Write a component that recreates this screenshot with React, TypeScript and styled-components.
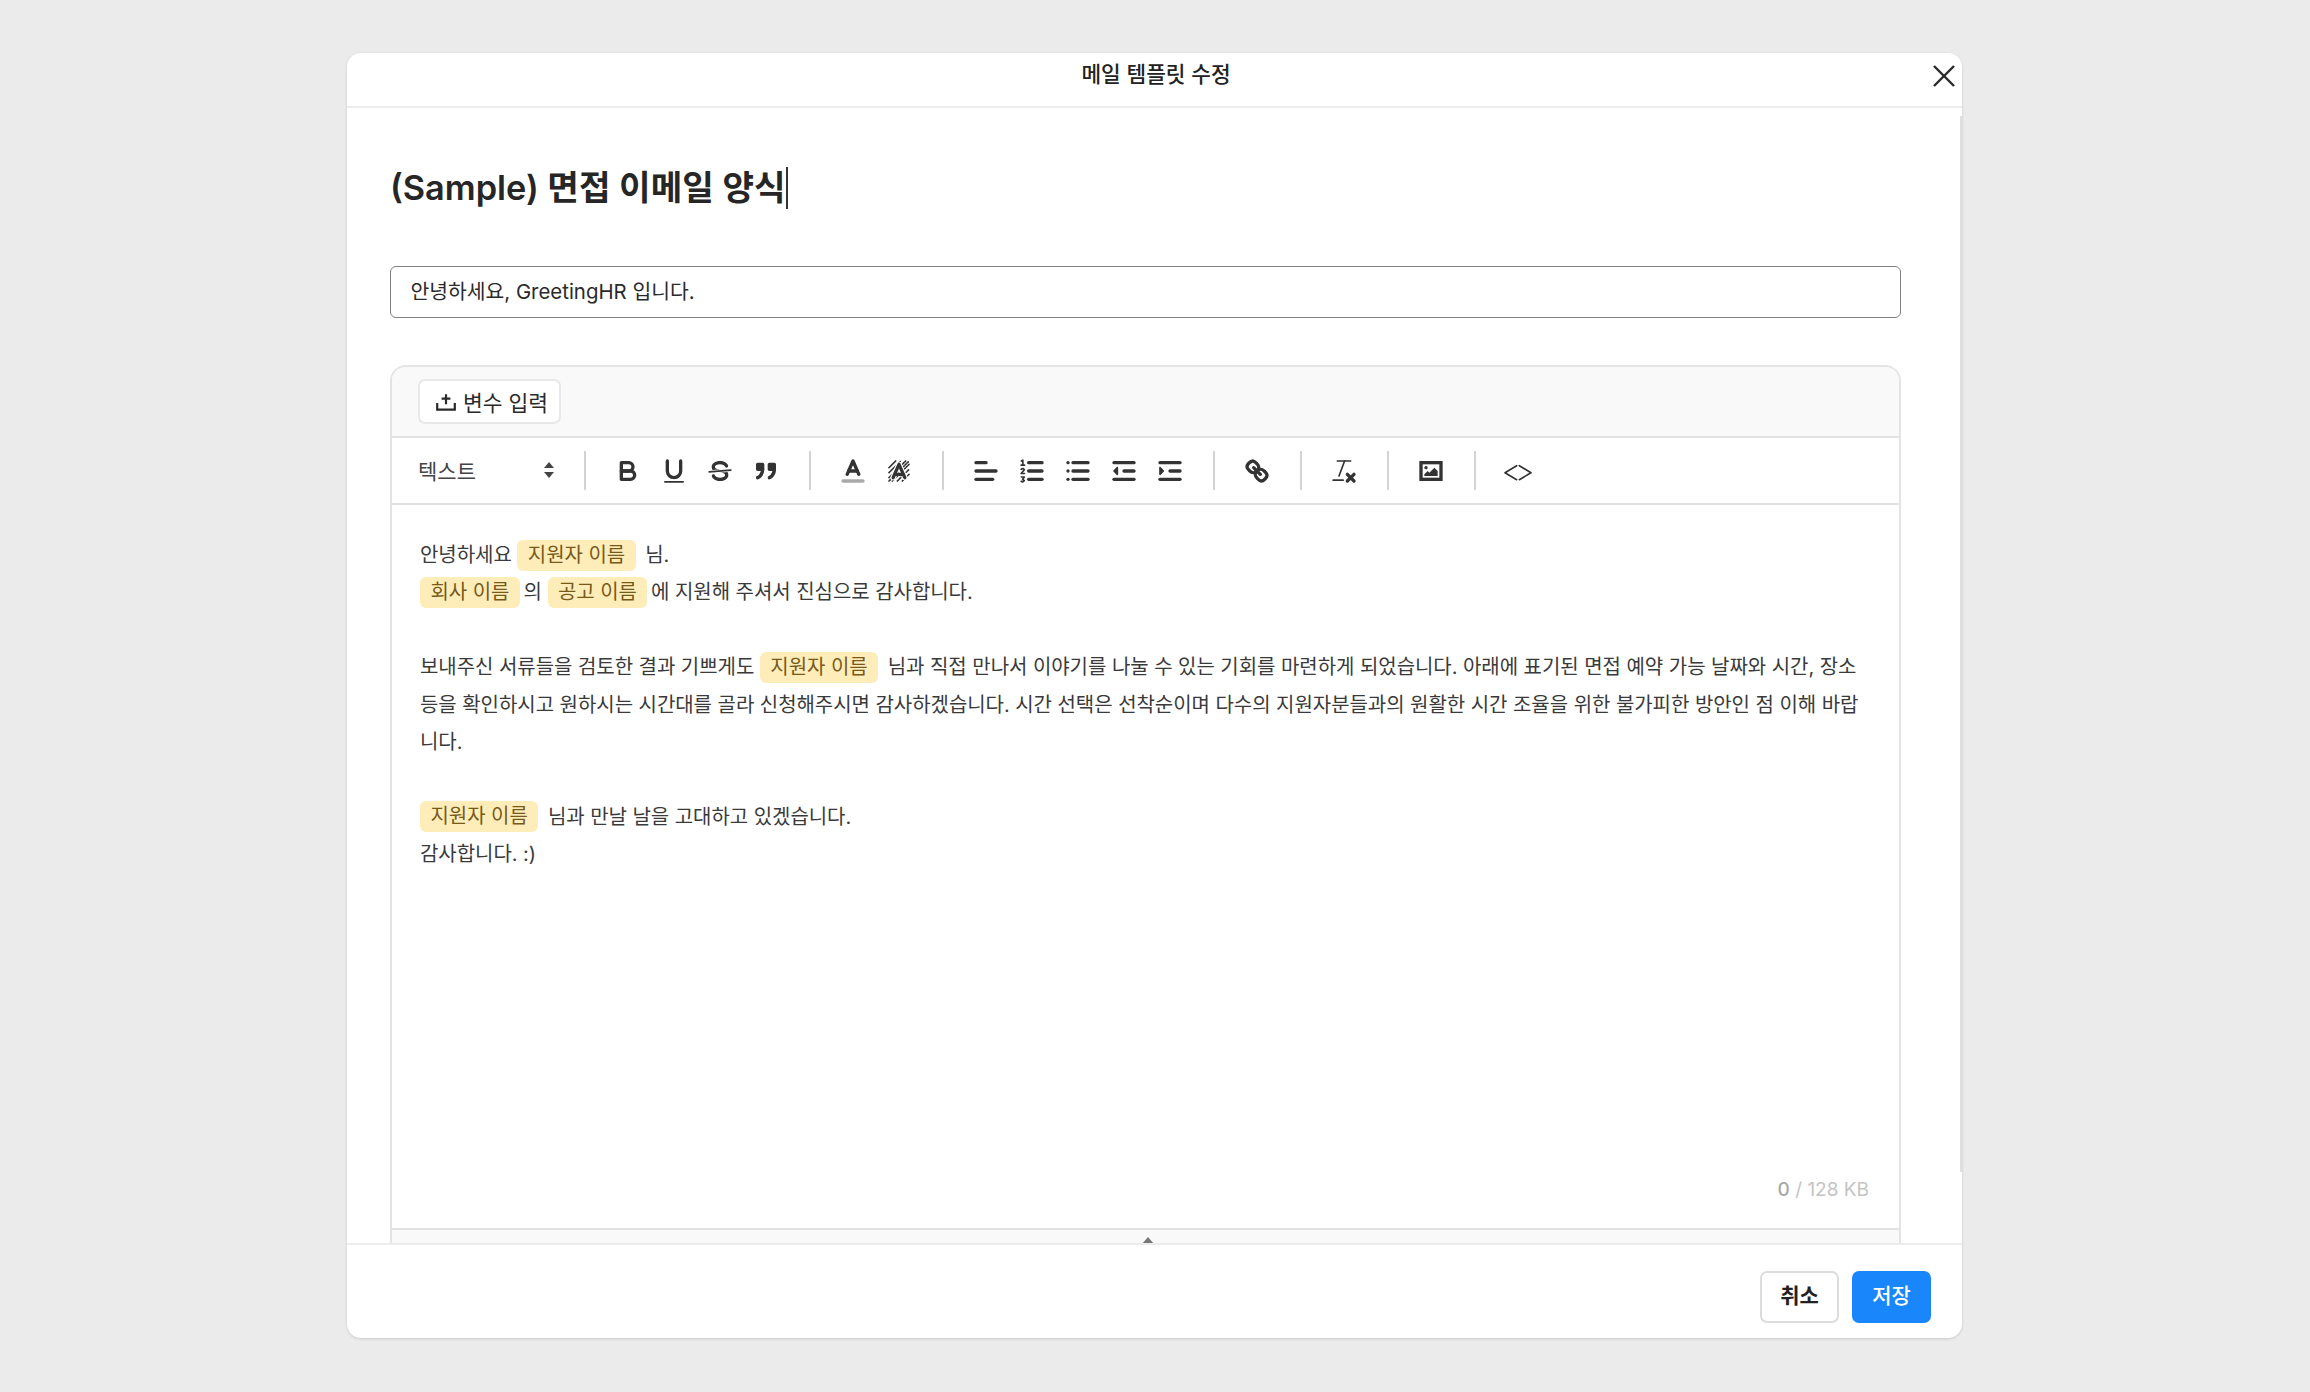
import styled, { createGlobalStyle } from 'styled-components'
import type { ReactNode } from 'react'

const FONT = `Inter, "Noto Sans CJK KR", sans-serif`

const GlobalStyle = createGlobalStyle`
  html, body {
    margin: 0;
    padding: 0;
    background: #ebebeb;
    font-family: ${FONT};
  }
  * {
    box-sizing: border-box;
  }
`

const Page = styled.div`
  width: 2310px;
  height: 1392px;
  overflow: hidden;
  padding-top: 53px;
  padding-left: 347px;
`

const Modal = styled.div`
  width: 1615px;
  height: 1285px;
  background: #fff;
  border-radius: 14px;
  box-shadow: 0 1px 3px rgba(0, 0, 0, 0.14);
  display: flex;
  flex-direction: column;
  overflow: hidden;
`

const ModalHeader = styled.header`
  position: relative;
  flex: none;
  height: 55px;
  border-bottom: 2px solid #ececec;
  display: flex;
  justify-content: center;
  padding: 5px 0 0 3px;
`

const ModalTitle = styled.h2`
  margin: 0;
  font-size: 21.4px;
  line-height: 32px;
  font-weight: 500;
  color: #222;
`

const CloseButton = styled.button`
  position: absolute;
  top: 10px;
  right: 5px;
  width: 26px;
  height: 26px;
  padding: 0;
  border: 0;
  background: none;
  color: #2b2b2b;
`

const ModalBody = styled.div`
  position: relative;
  flex: 1;
  min-height: 0;
  overflow: hidden;
  padding: 58px 61px 0 43px;
`

const ScrollThumb = styled.div`
  position: absolute;
  top: 8px;
  right: 0;
  width: 2px;
  height: 1056px;
  background: #dedede;
`

const TitleLine = styled.div`
  display: flex;
  align-items: center;
  height: 44px;
  margin-bottom: 56px;
`

const TitleText = styled.h1`
  margin: 0;
  font-size: 34.3px;
  line-height: 44px;
  font-weight: 600;
  color: #262626;
`

const Caret = styled.span`
  width: 2px;
  height: 42px;
  background: #333;
`

const SubjectField = styled.div`
  height: 52px;
  border: 1.5px solid #808080;
  border-radius: 6px;
  padding: 0 19.5px 5px;
  display: flex;
  align-items: center;
  font-size: 20.4px;
  color: #2a2a2a;
`

const Editor = styled.section`
  margin-top: 47px;
  border: 2px solid #e4e4e4;
  border-bottom: 0;
  border-radius: 16px 16px 0 0;
  overflow: hidden;
`

const VariableBar = styled.div`
  height: 71px;
  background: #f9f9f9;
  border-bottom: 2px solid #e2e2e2;
  padding: 12px 0 0 26px;
`

const VariableButton = styled.button`
  width: 143px;
  height: 45px;
  padding: 0 0 0 4px;
  background: #fff;
  border: 2px solid #e8e8e8;
  border-radius: 7px;
  display: flex;
  align-items: center;
  justify-content: center;
  gap: 6px;
  font-family: ${FONT};
  font-size: 21.5px;
  font-weight: 400;
  color: #2a2a2a;
`

const Toolbar = styled.div`
  height: 67px;
  border-bottom: 2px solid #e2e2e2;
  display: flex;
  align-items: center;
  padding-left: 26px;
`

const HeadingSelect = styled.div`
  width: 139px;
  display: flex;
  align-items: center;
  justify-content: space-between;
  padding: 0 2px 2px 0;
  font-size: 21px;
  color: #444;
  margin-right: 7.2px;
`

const Divider = styled.span`
  flex: none;
  width: 2px;
  height: 39px;
  background: #d4d4d4;
  margin: 0 19.5px;
`

const ToolButton = styled.span`
  flex: none;
  width: 46px;
  height: 30px;
  display: flex;
  align-items: center;
  justify-content: center;
  color: #333;

  svg {
    display: block;
    fill: none;
    stroke: currentColor;
    stroke-width: 2;
    stroke-linecap: round;
    stroke-linejoin: round;
  }
  .thin {
    stroke-width: 1;
  }
  .solid {
    fill: currentColor;
    stroke: none;
  }
`

const EditArea = styled.div`
  height: 723px;
  padding: 32px 30px 0 28px;
  display: flex;
  flex-direction: column;
`

const Copy = styled.div`
  font-size: 20px;
  line-height: 37.4px;
  letter-spacing: -0.05px;
  color: #3a3a3a;
  white-space: nowrap;
`

const Chip = styled.span<{ $trail?: boolean }>`
  display: inline-block;
  height: 31px;
  line-height: 30px;
  padding: 0 10.5px;
  margin-right: ${(p) => (p.$trail ? '4px' : '-2px')};
  background: #ffedb9;
  border-radius: 6px;
  color: #77591a;
  vertical-align: 0.5px;
`

const ByteCount = styled.div`
  margin-top: auto;
  margin-bottom: 26px;
  align-self: flex-end;
  font-size: 19px;
  line-height: 24px;
  color: #c4c4c4;

  b {
    font-weight: 500;
    color: #a8a8a8;
  }
`

const ResizeBar = styled.div`
  height: 16px;
  background: #f9f9f9;
  border-top: 2px solid #e2e2e2;
  display: flex;
  justify-content: center;
  align-items: flex-end;
  padding-left: 5px;
`

const ResizeArrow = styled.span`
  width: 0;
  height: 0;
  border-left: 6px solid transparent;
  border-right: 6px solid transparent;
  border-bottom: 7px solid #777;
`

const ModalFooter = styled.footer`
  flex: none;
  height: 95px;
  border-top: 2px solid #ececec;
  display: flex;
  justify-content: flex-end;
  gap: 13px;
  padding: 26px 31px 0 0;
`

const FooterButton = styled.button<{ $primary?: boolean }>`
  width: 79px;
  height: 52px;
  padding: 0 0 6px;
  border-radius: 7px;
  border: 2px solid ${(p) => (p.$primary ? '#1a86fb' : '#dcdcdc')};
  background: ${(p) => (p.$primary ? '#1a86fb' : '#fff')};
  color: ${(p) => (p.$primary ? '#fff' : '#222')};
  font-family: ${FONT};
  font-size: 21px;
  font-weight: ${(p) => (p.$primary ? 500 : 600)};
`

const Icon = ({ children }: { children: ReactNode }) => (
  <ToolButton>
    <svg width="30" height="30" viewBox="0 0 18 18">{children}</svg>
  </ToolButton>
)

const BackgroundA = () => (
  <>
    <g className="thin" strokeDasharray="1 0.7">
      <line x1="3" y1="7" x2="7" y2="3" />
      <line x1="3" y1="10" x2="10" y2="3" />
      <line x1="3" y1="13" x2="13" y2="3" />
      <line x1="3" y1="15" x2="15" y2="3" />
      <line x1="5" y1="15" x2="15" y2="5" />
      <line x1="8" y1="15" x2="15" y2="8" />
      <line x1="11" y1="15" x2="15" y2="11" />
    </g>
    <polyline points="5.5 13 9 5 12.5 13" stroke="#fff" strokeWidth="3.4" />
    <polyline points="5.5 13 9 5 12.5 13" />
    <line x1="11.2" x2="6.8" y1="11" y2="11" />
  </>
)

const OrderedMarks = () => (
  <>
    <polyline className="thin" points="2.6 3 3.5 2.5 3.5 5.5" />
    <line className="thin" x1="2.5" x2="4.5" y1="5.5" y2="5.5" />
    <polyline className="thin" points="2.5 8 3.5 7.5 4.4 8.2 2.5 10.5 4.5 10.5" />
    <polyline className="thin" points="2.6 12.6 4.4 12.6 3.4 14 4.4 14.8 3.5 15.5 2.5 15.2" />
  </>
)

const App = () => {
  return (
    <Page>
      <GlobalStyle />
      <Modal>
        <ModalHeader>
          <ModalTitle>메일 템플릿 수정</ModalTitle>
          <CloseButton aria-label="닫기">
            <svg width="26" height="26" viewBox="0 0 26 26" fill="none" stroke="currentColor" strokeWidth="2.4">
              <line x1="3" y1="3" x2="23" y2="23" />
              <line x1="23" y1="3" x2="3" y2="23" />
            </svg>
          </CloseButton>
        </ModalHeader>

        <ModalBody>
          <ScrollThumb />
          <TitleLine>
            <TitleText>(Sample) 면접 이메일 양식</TitleText>
            <Caret />
          </TitleLine>

          <SubjectField>안녕하세요, GreetingHR 입니다.</SubjectField>

          <Editor>
            <VariableBar>
              <VariableButton>
                <svg width="22" height="22" viewBox="0 0 20 20" fill="none" stroke="currentColor" strokeWidth="2">
                  <path d="M2 11v6h16v-6" />
                  <path d="M10 3v9M6 7h8" />
                </svg>
                변수 입력
              </VariableButton>
            </VariableBar>

            <Toolbar>
              <HeadingSelect>
                텍스트
                <svg width="12" height="20" viewBox="0 0 12 20" fill="#444">
                  <polygon points="6 2 11 8 1 8" />
                  <polygon points="6 18 11 12 1 12" />
                </svg>
              </HeadingSelect>
              <Divider />
              <Icon>
                <path d="M5,4H9.5A2.5,2.5,0,0,1,12,6.5v0A2.5,2.5,0,0,1,9.5,9H5V4Z" />
                <path d="M5,9h5.5A2.5,2.5,0,0,1,13,11.5v0A2.5,2.5,0,0,1,10.5,14H5V9Z" />
              </Icon>
              <Icon>
                <path d="M5,3V9a4.012,4.012,0,0,0,4,4H9a4.012,4.012,0,0,0,4-4V3" />
                <rect className="solid" height="1" rx="0.5" ry="0.5" width="12" x="3" y="15" />
              </Icon>
              <Icon>
                <line className="thin" x1="15.5" x2="2.5" y1="8.5" y2="9.5" />
                <path className="solid" d="M9.007,8C6.542,7.791,6,7.519,6,6.5,6,5.792,7.283,5,9,5c1.571,0,2.765.679,2.969,1.309a1,1,0,0,0,1.9-.617C13.356,4.106,11.354,3,9,3,6.2,3,4,4.538,4,6.5a3.2,3.2,0,0,0,.5,1.843Z" />
                <path className="solid" d="M8.984,10C11.457,10.208,12,10.479,12,11.5c0,.708-1.283,1.5-3,1.5-1.571,0-2.765-.679-2.969-1.309a1,1,0,1,0-1.9.617C4.644,13.894,6.646,15,9,15c2.8,0,5-1.538,5-3.5a3.2,3.2,0,0,0-.5-1.843Z" />
              </Icon>
              <Icon>
                <rect fill="currentColor" height="3" width="3" x="4" y="5" />
                <rect fill="currentColor" height="3" width="3" x="11" y="5" />
                <path fill="currentColor" d="M7,8c0,4.031-3,5-3,5" />
                <path fill="currentColor" d="M14,8c0,4.031-3,5-3,5" />
              </Icon>
              <Divider />
              <Icon>
                <line stroke="#aaa" x1="3" x2="15" y1="15" y2="15" />
                <polyline points="5.5 11 9 3 12.5 11" />
                <line x1="11.63" x2="6.38" y1="9" y2="9" />
              </Icon>
              <Icon>
                <BackgroundA />
              </Icon>
              <Divider />
              <Icon>
                <line x1="3" x2="15" y1="9" y2="9" />
                <line x1="3" x2="13" y1="14" y2="14" />
                <line x1="3" x2="9" y1="4" y2="4" />
              </Icon>
              <Icon>
                <line x1="7" x2="15" y1="4" y2="4" />
                <line x1="7" x2="15" y1="9" y2="9" />
                <line x1="7" x2="15" y1="14" y2="14" />
                <OrderedMarks />
              </Icon>
              <Icon>
                <line x1="6" x2="15" y1="4" y2="4" />
                <line x1="6" x2="15" y1="9" y2="9" />
                <line x1="6" x2="15" y1="14" y2="14" />
                <line x1="3" x2="3" y1="4" y2="4" />
                <line x1="3" x2="3" y1="9" y2="9" />
                <line x1="3" x2="3" y1="14" y2="14" />
              </Icon>
              <Icon>
                <line x1="3" x2="15" y1="14" y2="14" />
                <line x1="3" x2="15" y1="4" y2="4" />
                <line x1="9" x2="15" y1="9" y2="9" />
                <polygon fill="currentColor" strokeWidth="1" points="5 7 5 11 3 9 5 7" />
              </Icon>
              <Icon>
                <line x1="3" x2="15" y1="14" y2="14" />
                <line x1="3" x2="15" y1="4" y2="4" />
                <line x1="9" x2="15" y1="9" y2="9" />
                <polygon fill="currentColor" strokeWidth="1" points="3 7 3 11 5 9 3 7" />
              </Icon>
              <Divider />
              <Icon>
                <line x1="7" x2="11" y1="7" y2="11" />
                <path d="M8.9,4.577a3.476,3.476,0,0,1,.36,4.679A3.476,3.476,0,0,1,4.577,8.9C3.185,7.5,2.035,6.4,4.217,4.217S7.5,3.185,8.9,4.577Z" />
                <path d="M13.423,9.1a3.476,3.476,0,0,0-4.679-.36,3.476,3.476,0,0,0,.36,4.679c1.392,1.392,2.5,2.542,4.679.36S14.815,10.5,13.423,9.1Z" />
              </Icon>
              <Divider />
              <Icon>
                <line className="thin" x1="5" x2="13" y1="3" y2="3" />
                <line className="thin" x1="6" x2="9.35" y1="12" y2="3" />
                <line x1="11" x2="15" y1="11" y2="15" />
                <line x1="15" x2="11" y1="11" y2="15" />
                <rect className="solid" height="1" rx="0.5" ry="0.5" width="7" x="2" y="14" />
              </Icon>
              <Divider />
              <Icon>
                <rect height="10" width="12" x="3" y="4" strokeLinejoin="miter" />
                <circle className="solid" cx="6" cy="7" r="1" />
                <polyline className="solid" points="5 12 5 11 7 9 8 10 11 7 13 9 13 12 5 12" />
              </Icon>
              <Divider />
              <Icon>
                <polyline className="thin" points="8.2 5.8 1.2 10 8.2 14.2" />
                <polyline className="thin" points="9.8 5.8 16.8 10 9.8 14.2" />
              </Icon>
            </Toolbar>

            <EditArea>
              <Copy>
                안녕하세요 <Chip $trail>지원자 이름</Chip> 님.
                <br />
                <Chip>회사 이름</Chip> 의 <Chip>공고 이름</Chip> 에 지원해 주셔서 진심으로 감사합니다.
                <br />
                <br />
                보내주신 서류들을 검토한 결과 기쁘게도 <Chip $trail>지원자 이름</Chip> 님과 직접 만나서 이야기를 나눌 수 있는 기회를 마련하게 되었습니다. 아래에 표기된 면접 예약 가능 날짜와 시간, 장소
                <br />
                등을 확인하시고 원하시는 시간대를 골라 신청해주시면 감사하겠습니다. 시간 선택은 선착순이며 다수의 지원자분들과의 원활한 시간 조율을 위한 불가피한 방안인 점 이해 바랍
                <br />
                니다.
                <br />
                <br />
                <Chip $trail>지원자 이름</Chip> 님과 만날 날을 고대하고 있겠습니다.
                <br />
                감사합니다. :)
              </Copy>
              <ByteCount>
                <b>0</b> / 128 KB
              </ByteCount>
            </EditArea>

            <ResizeBar>
              <ResizeArrow />
            </ResizeBar>
          </Editor>
        </ModalBody>

        <ModalFooter>
          <FooterButton>취소</FooterButton>
          <FooterButton $primary>저장</FooterButton>
        </ModalFooter>
      </Modal>
    </Page>
  )
}

export default App
